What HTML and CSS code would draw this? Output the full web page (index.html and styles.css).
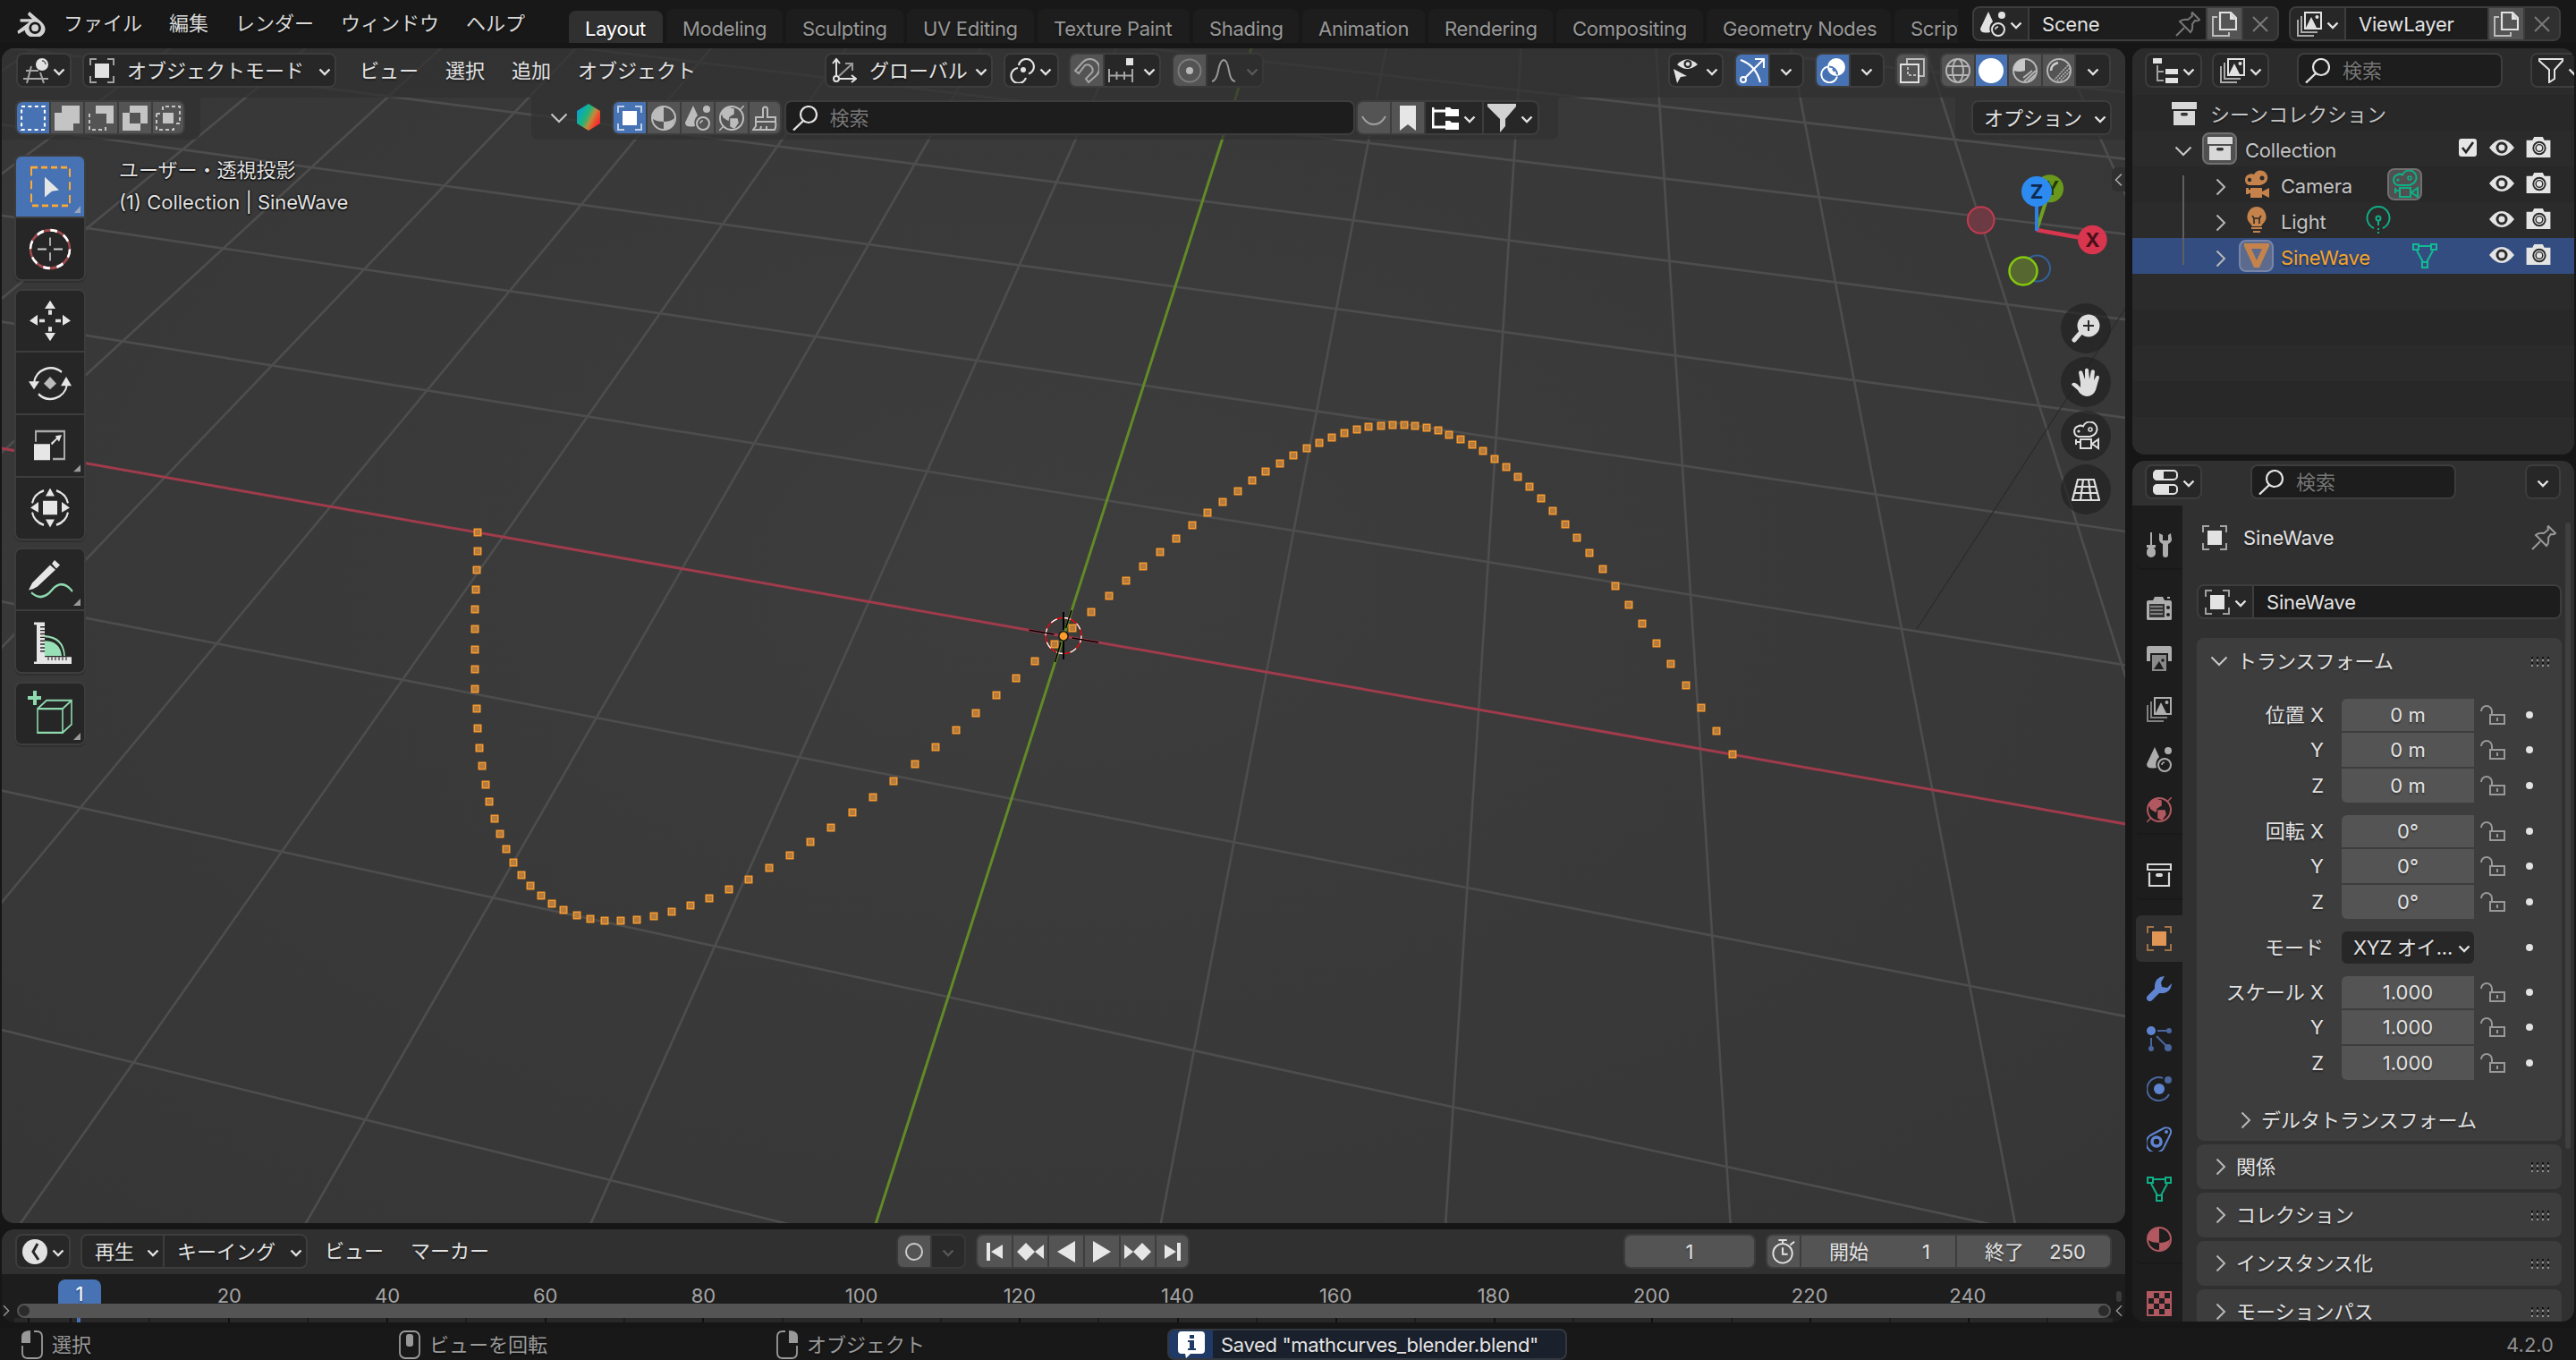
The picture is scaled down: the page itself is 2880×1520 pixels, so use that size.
FILE: index.html
```html
<!DOCTYPE html>
<html lang="ja">
<head>
<meta charset="utf-8">
<title>Blender</title>
<link rel="stylesheet" href="styles.css">
</head>
<body>
<svg class="defs" width="0" height="0">
<defs>
<linearGradient id="hexg" x1="0" y1="0.2" x2="1" y2="0.8"><stop offset="0" stop-color="#0a9be0"/><stop offset=".4" stop-color="#19b87a"/><stop offset=".62" stop-color="#c08a3c"/><stop offset=".8" stop-color="#f4442a"/><stop offset="1" stop-color="#e0203a"/></linearGradient>
<symbol id="chev" viewBox="0 0 14 9"><path d="M1.5 1.5L7 7l5.500-5.500" fill="none" stroke="currentColor" stroke-width="2.400"/></symbol>
<symbol id="chevR" viewBox="0 0 12 20"><path d="M1.500 1.500L10 10l-8.500 8.500" fill="none" stroke="currentColor" stroke-width="2"/></symbol>
<symbol id="chevD" viewBox="0 0 20 12"><path d="M1.500 1.500L10 10l8.500-8.500" fill="none" stroke="currentColor" stroke-width="2"/></symbol>
<symbol id="logo" viewBox="0 0 32 28"><path d="M1 22L14 12H4V9h13l-5-5 2-3 13 11q4 4 4 8a11 8.500 0 0 1-22 1l-7 4z" fill="currentColor"/><circle cx="20" cy="18.500" r="6.500" fill="#181818"/><circle cx="20" cy="18.500" r="3.800" fill="currentColor"/></symbol>
<symbol id="view3d" viewBox="0 0 28 28"><path d="M3 14h14M0 23h28M9 9L4 28M19 16l4 12" fill="none" stroke="#a5a5a5" stroke-width="2"/><circle cx="21" cy="7" r="7" fill="currentColor"/><path d="M21 3a4 4 0 0 1 4 4" fill="none" stroke="#555" stroke-width="1.500"/></symbol>
<symbol id="obj" viewBox="0 0 28 28"><path d="M1 8V1h7M20 1h7v7M27 20v7h-7M8 27H1v-7" fill="none" stroke="currentColor" stroke-opacity=".65" stroke-width="2"/><path d="M6 6h16v16H6z" fill="currentColor"/></symbol>
<symbol id="orient" viewBox="0 0 28 28"><path d="M5 20V2M1 6l4-5 4 5M8 23h18M22 19l5 4-5 4" fill="none" stroke="currentColor" stroke-width="2"/><path d="M8 20L22 7M15 6h8v8" fill="none" stroke="#999" stroke-width="2"/><circle cx="5" cy="23" r="3" fill="none" stroke="currentColor" stroke-width="2"/></symbol>
<symbol id="pivot" viewBox="0 0 28 28"><circle cx="15" cy="13" r="3" fill="currentColor"/><path d="M10 8a8.500 8.500 0 1 1 11 9.500M9 11a8.500 8.500 0 1 0 9 11" fill="none" stroke="currentColor" stroke-width="2.200"/></symbol>
<symbol id="magnet" viewBox="0 0 28 28"><path d="M1 14L10 4a10.500 10.500 0 0 1 15 15L16 27l-3-4 7-7a6 6 0 0 0-8-8l-7 9z" fill="none" stroke="currentColor" stroke-width="2"/></symbol>
<symbol id="incr" viewBox="0 0 28 28"><path d="M1 12v15M27 12v15M9.500 15v9M18 15v9M1 19.500h26" fill="none" stroke="#a5a5a5" stroke-width="2"/><path d="M20 0h8v8h-8z" fill="currentColor"/></symbol>
<symbol id="prop" viewBox="0 0 28 28"><circle cx="14" cy="14" r="12.500" fill="none" stroke="#7c7c7c" stroke-width="2"/><circle cx="14" cy="14" r="4" fill="#b8b8b8"/></symbol>
<symbol id="curve" viewBox="0 0 28 28"><path d="M1 26Q6 25 8 14T14 2q4 0 6 12t7 12" fill="none" stroke="#989898" stroke-width="2"/></symbol>
<symbol id="vis" viewBox="0 0 28 28"><path d="M5 7Q16-4 28 7Q16 17 5 7z" fill="currentColor"/><circle cx="17" cy="6.500" r="4.500" fill="#272727"/><circle cx="17" cy="6.500" r="2.300" fill="currentColor"/><path d="M1 12l15 8-7 1-4 7z" fill="currentColor"/></symbol>
<symbol id="gizmo" viewBox="0 0 28 28"><path d="M1 2q17 6 22 25M6 22L26 2M17 1h10v10" fill="none" stroke="currentColor" stroke-width="2.200"/><circle cx="4" cy="24" r="3" fill="none" stroke="currentColor" stroke-width="2"/></symbol>
<symbol id="overlay" viewBox="0 0 28 28"><circle cx="18" cy="10" r="10" fill="currentColor"/><path d="M8 9.500a9 9 0 1 0 11 11" fill="none" stroke="currentColor" stroke-width="2"/><path d="M10 9.500a9 9 0 0 1 9 9" fill="none" stroke="#4772b3" stroke-width="2"/><path d="M14 12l2 3" stroke="#4772b3" stroke-width="2"/></symbol>
<symbol id="xray" viewBox="0 0 28 28"><path d="M8 6V1h19v19h-5" fill="none" stroke="#bbb" stroke-width="2"/><path d="M1 7h20v20H1z" fill="none" stroke="currentColor" stroke-width="2"/><path d="M9 10v9h10" fill="none" stroke="#bbb" stroke-width="2" stroke-dasharray="3 2"/></symbol>
<symbol id="wire" viewBox="0 0 28 28"><g fill="none" stroke="#b5b5b5" stroke-width="2"><circle cx="14" cy="14" r="13"/><ellipse cx="14" cy="14" rx="6" ry="13"/><path d="M2 9h24M2 19h24"/></g></symbol>
<symbol id="solid" viewBox="0 0 28 28"><circle cx="14" cy="14" r="14" fill="#fff"/></symbol>
<symbol id="matprev" viewBox="0 0 28 28"><circle cx="14" cy="14" r="13" fill="none" stroke="#b5b5b5" stroke-width="2"/><path d="M14 1v13q-6 2-13 0A13 13 0 0 1 14 1z" fill="#c8c8c8"/><path d="M26 14L13 26M26 18L17 26M22 14L12 22" stroke="#b5b5b5" stroke-width="1.800"/></symbol>
<symbol id="rendered" viewBox="0 0 28 28"><circle cx="14" cy="14" r="13" fill="none" stroke="#b5b5b5" stroke-width="2"/><path d="M5 14q0-7 8-9" fill="none" stroke="#d0d0d0" stroke-width="2.500"/><path d="M26 11L11 26M26 15L15 26M24 8L9 24" stroke="#b5b5b5" stroke-width="1.500" stroke-dasharray="2 1"/></symbol>
<symbol id="selset" viewBox="0 0 28 28"><path d="M1 1h26v26H1z" fill="none" stroke="#fff" stroke-width="2.200" stroke-dasharray="4 3.430"/></symbol>
<symbol id="selext" viewBox="0 0 28 28"><path d="M8 0h20v20h-7v8H0V8h8z" fill="#c4c4c4"/></symbol>
<symbol id="selsub" viewBox="0 0 28 28"><path d="M8 0h20v20h-8V9H8z" fill="#c4c4c4"/><path d="M1 9v18h18v-5" fill="none" stroke="#c4c4c4" stroke-width="2" stroke-dasharray="4 3"/></symbol>
<symbol id="seldif" viewBox="0 0 28 28"><path d="M8 0h20v20h-8v8H0V8h8zM8 8v12h12V8z" fill="#c4c4c4" fill-rule="evenodd"/></symbol>
<symbol id="selint" viewBox="0 0 28 28"><path d="M8 5V1h19v19h-4M1 9v18h19v-3M1 9h4" fill="none" stroke="#c4c4c4" stroke-width="2" stroke-dasharray="4 3"/><path d="M8 8h12v12H8z" fill="#c4c4c4"/></symbol>
<symbol id="hex" viewBox="0 0 26 30"><path d="M13 0l13 8v14l-13 8L0 22V8z" fill="url(#hexg)"/></symbol>
<symbol id="mat" viewBox="0 0 28 28"><circle cx="14" cy="14" r="13" fill="none" stroke="currentColor" stroke-width="2"/><path d="M14 1v17Q6 18 2 15 0 5 14 1zM14 18q8 0 12-4-1 12-12 13z" fill="currentColor"/></symbol>
<symbol id="scene" viewBox="0 0 28 28"><path d="M9 0l5 11q-5 5-3 12-11 2-11-4z" fill="currentColor"/><circle cx="24" cy="4" r="4" fill="currentColor"/><circle cx="20" cy="20" r="7" fill="none" stroke="currentColor" stroke-width="2"/><path d="M17 20a3 3 0 0 1 3-3" fill="none" stroke="currentColor" stroke-width="1.500"/></symbol>
<symbol id="world" viewBox="0 0 28 28"><circle cx="14" cy="14" r="13" fill="none" stroke="currentColor" stroke-width="2"/><path d="M3 8L9 2l7 2v5l-5 3-1 4-5-3zM13 15h7l1 4-4 6-4-2zM0 28l5-5M28 0l-5 5" fill="currentColor" stroke="currentColor" stroke-width="1.500"/></symbol>
<symbol id="brush" viewBox="0 0 28 28"><path d="M12 13V4a2.500 2.500 0 0 1 5 0v9h9v5H4v-5zM4 18v5l-3 4h24q2-3 1-9M9 27l1-4M16 27v-4" fill="none" stroke="currentColor" stroke-width="2"/></symbol>
<symbol id="search" viewBox="0 0 28 28"><circle cx="18" cy="10" r="9" fill="none" stroke="currentColor" stroke-width="2.200"/><path d="M12 17L1 27.500" stroke="currentColor" stroke-width="2.400"/></symbol>
<symbol id="closed" viewBox="0 0 28 28"><path d="M1 12q5 9 13 9t13-9" fill="none" stroke="#a0a0a0" stroke-width="2"/></symbol>
<symbol id="bookmark" viewBox="0 0 28 28"><path d="M5 0h18v28l-9-7-9 7z" fill="#e6e6e6"/></symbol>
<symbol id="tree" viewBox="0 0 30 28"><path d="M1 2v22h14M1 6h14" fill="none" stroke="#fff" stroke-width="3"/><path d="M15 2h5l2 2h8v8H15zM15 17h5l2 2h8v8H15z" fill="#fff"/></symbol>
<symbol id="funnel" viewBox="0 0 32 32"><path d="M0 0h32v3L20 17v8l-6 7V17L0 3z" fill="#d2d2d2"/></symbol>
<symbol id="funnelo" viewBox="0 0 28 28"><path d="M1 1h26v2l-9 10v10l-6 4V13L1 3z" fill="none" stroke="currentColor" stroke-width="2"/></symbol>
<symbol id="outl" viewBox="0 0 28 28"><path d="M5 8v17h7M5 15h7" fill="none" stroke="#a0a0a0" stroke-width="2"/><path d="M0 0h10v6H0zM14 12h14v6H14zM14 22h14v6H14z" fill="currentColor"/></symbol>
<symbol id="images" viewBox="0 0 28 28"><path d="M9 1h18v18H9z" fill="none" stroke="currentColor" stroke-width="2"/><path d="M10 18l6-12 6 12z" fill="currentColor"/><circle cx="22.500" cy="6" r="2" fill="currentColor"/><path d="M5 5v18h18M1 9v18h18" fill="none" stroke="currentColor" stroke-opacity=".7" stroke-width="2"/></symbol>
<symbol id="copy" viewBox="0 0 28 28"><path d="M9 1h12l6 6v13H9z" fill="none" stroke="currentColor" stroke-width="2.200"/><path d="M20 1v8h7z" fill="currentColor"/><path d="M6 6H1v21h18v-4" fill="none" stroke="#bbb" stroke-width="2"/></symbol>
<symbol id="x" viewBox="0 0 18 18"><path d="M1 1l16 16M17 1L1 17" stroke="#7a7a7a" stroke-width="2"/></symbol>
<symbol id="pin" viewBox="0 0 28 28"><path d="M19 1l8 8q-2 2-5 1l-3 4q1 6-2 9L5 11q3-3 9-2l5-4q-1-3 0-4zM10 18L1 27" fill="none" stroke="currentColor" stroke-width="2"/></symbol>
<symbol id="coll" viewBox="0 0 28 28"><path d="M0 1h28v8H0zM2 11h24v16H2z" fill="currentColor"/><rect x="10" y="13" width="8" height="3.500" rx="1.700" fill="#333"/></symbol>
<symbol id="collo" viewBox="0 0 28 28"><path d="M1 2h26v6H1zM3 11v15h22V11" fill="none" stroke="currentColor" stroke-width="2.200"/><rect x="10" y="12" width="8" height="4" rx="2" fill="currentColor"/></symbol>
<symbol id="cam" viewBox="0 0 32 32"><path d="M7 5a6.500 6.500 0 0 1 6 0 8 8 0 1 1 10 11l-3 1H7A6.500 6.500 0 0 1 7 5z" fill="currentColor"/><circle cx="22" cy="9" r="2.500" fill="#2b2b2b"/><circle cx="8" cy="11" r="2.200" fill="#2b2b2b"/><path d="M4 20h3v2h2v-2h13v4l8-4v11l-8-4v4H9v-5H7v1H4z" fill="currentColor"/></symbol>
<symbol id="camo" viewBox="0 0 32 32"><path d="M7 5.500a6 6 0 0 1 6 0 8 8 0 1 1 10 10.500l-2 1H8A6 6 0 0 1 7 5.500z" fill="none" stroke="currentColor" stroke-width="2"/><circle cx="21" cy="9" r="2" fill="none" stroke="currentColor" stroke-width="1.600"/><circle cx="8" cy="11" r="1.600" fill="currentColor"/><path d="M5 20v6M5 23h4M10 20h12v10H10zM30 20v10l-7-5z" fill="none" stroke="currentColor" stroke-width="2"/></symbol>
<symbol id="bulb" viewBox="0 0 28 32"><path d="M14 1a11 11 0 0 1 7 19l-2 3H9l-2-3A11 11 0 0 1 14 1zM8 24h12v2H8zM10 28h8v2h-8z" fill="currentColor"/><path d="M9 11l2 3h6l2-3M11 14v6M17 14v6" fill="none" stroke="#2b2b2b" stroke-width="1.600"/></symbol>
<symbol id="lampo" viewBox="0 0 28 32"><path d="M9 25a12.500 12.500 0 1 1 10 0" fill="none" stroke="currentColor" stroke-width="2"/><circle cx="14" cy="14" r="2.500" fill="none" stroke="currentColor" stroke-width="2"/><path d="M14 17v5M14 25v2M14 29v2" stroke="currentColor" stroke-width="2"/></symbol>
<symbol id="mesh" viewBox="0 0 28 28"><path d="M0 0h28v3L17 27h-6L0 3zM8 6l6 13 6-13z" fill="currentColor" fill-rule="evenodd"/></symbol>
<symbol id="mesho" viewBox="0 0 28 28"><path d="M1 1h6v6H1zM21 1h6v6h-6zM11 21h6v6h-6zM8 3h12M5 8l7 13M23 8l-7 13" fill="none" stroke="currentColor" stroke-width="2"/></symbol>
<symbol id="eye" viewBox="0 0 28 20"><path d="M0 10Q14-8 28 10Q14 28 0 10z" fill="currentColor"/><circle cx="14" cy="10" r="6.500" fill="#2b2b2b"/><circle cx="14" cy="10" r="3.500" fill="currentColor"/></symbol>
<symbol id="photo" viewBox="0 0 28 24"><path d="M0 4h7l2-4h10l2 4h7v20H0z" fill="currentColor"/><circle cx="15" cy="13" r="7" fill="none" stroke="#2b2b2b" stroke-width="2"/><circle cx="15" cy="13" r="4" fill="none" stroke="#2b2b2b" stroke-width="1.500"/></symbol>
<symbol id="check" viewBox="0 0 20 20"><rect width="20" height="20" rx="3" fill="#e6e6e6"/><path d="M4 10l4 5 8-11" fill="none" stroke="#222" stroke-width="2.600"/></symbol>
<symbol id="props" viewBox="0 0 28 28"><rect x="1" y="1" width="26" height="10" rx="4" fill="none" stroke="currentColor" stroke-width="2"/><path d="M4 0h8v12H4q-4-1-4-6t4-6zM4 16h14v12H4q-4-1-4-6t4-6z" fill="currentColor"/><rect x="1" y="17" width="26" height="10" rx="4" fill="none" stroke="currentColor" stroke-width="2"/></symbol>
<symbol id="tool" viewBox="0 0 28 28"><path d="M5 0v13M5 13v4" stroke="currentColor" stroke-width="2"/><path d="M0 14h10v3H8q2 2 2 6a5 5 0 0 1-10 0q0-4 2-6H0zM14 1v7q0 3 4 5v12a3 3 0 0 0 6 0V13q4-2 4-5l-1-7-3 2v6h-6V3z" fill="currentColor"/></symbol>
<symbol id="rend" viewBox="0 0 28 28"><path d="M0 7q0-2 2-2h5l2-4h9l2 4h6q2 0 2 2v19q0 1-2 1H2q-2 0-2-1zM23 1h3v2h-3z" fill="currentColor"/><path d="M3 9h17v15H3z" fill="#333"/><path d="M4 12h14M4 16h14M4 20h14" stroke="#999" stroke-width="1.500"/><circle cx="24" cy="13" r="2" fill="#1d1d1d"/><circle cx="24" cy="21" r="2" fill="#1d1d1d"/></symbol>
<symbol id="outp" viewBox="0 0 28 28"><path d="M2 0h24q2 0 2 3v14h-4V8H4v9H0V3q0-3 2-3z" fill="currentColor"/><path d="M6 10h16v18H6z" fill="currentColor" opacity=".75"/><path d="M8 26l6-9 5 9z" fill="#1d1d1d"/><circle cx="18" cy="16" r="1.800" fill="#1d1d1d"/></symbol>
<symbol id="wrench" viewBox="0 0 28 28"><path d="M20 0q-12 1-11 14L1 22a3.500 3.500 0 0 0 5 5l8-8q13 1 14-11l-5 5-6-1-1-5z" fill="currentColor"/></symbol>
<symbol id="part" viewBox="0 0 28 28"><g fill="none" stroke="#4a669e" stroke-width="2"><path d="M12 5h11M5 13v10M11 11l12 12"/></g><circle cx="5" cy="5" r="5" fill="currentColor"/><circle cx="25" cy="5" r="3" fill="#4a669e"/><circle cx="5" cy="25" r="3" fill="#4a669e"/><circle cx="24" cy="24" r="4" fill="#4a669e"/></symbol>
<symbol id="phys" viewBox="0 0 28 28"><path d="M18 2a13 13 0 1 0 7 18" fill="none" stroke="#4a669e" stroke-width="2"/><circle cx="14" cy="14" r="6" fill="currentColor"/><circle cx="24" cy="4" r="4" fill="#4a669e"/></symbol>
<symbol id="constr" viewBox="0 0 28 28"><path d="M4 10L20 1.500q8-1 7 6L20 22A10.500 10.500 0 1 1 4 10z" fill="none" stroke="currentColor" stroke-width="2"/><circle cx="11" cy="17" r="5" fill="none" stroke="currentColor" stroke-width="3.500"/><circle cx="22" cy="6" r="2" fill="currentColor"/></symbol>
<symbol id="tex" viewBox="0 0 28 28"><path d="M1 1h26v26H1z" fill="none" stroke="currentColor" stroke-width="2"/><path d="M2 2h6v6H2zM14 2h6v6h-6zM8 8h6v6H8zM20 8h6v6h-6zM2 14h6v6H2zM14 14h6v6h-6zM8 20h6v6H8zM20 20h6v6h-6z" fill="currentColor"/></symbol>
<symbol id="lock" viewBox="0 0 28 22"><path d="M1 7a6 6 0 0 1 12 0v4M11 11h16v10H11z" fill="none" stroke="#999" stroke-width="2"/><path d="M19 14v4" stroke="#999" stroke-width="2"/></symbol>
<symbol id="clock" viewBox="0 0 28 28"><circle cx="14" cy="14" r="14" fill="currentColor"/><path d="M17 5l-5 9 6 9" fill="none" stroke="#272727" stroke-width="3"/></symbol>
<symbol id="drag" viewBox="0 0 22 11"><path d="M0 5h2V3H0zm6 0h2V3H6zm6 0h2V3h-2zm6 0h2V3h-2zM0 11h2V9H0zm6 0h2V9H6zm6 0h2V9h-2zm6 0h2V9h-2z" fill="#919191"/><path d="M0 2h2V0H0zm6 0h2V0H6zm6 0h2V0h-2zm6 0h2V0h-2zM0 8h2V6H0zm6 0h2V6H6zm6 0h2V6h-2zm6 0h2V6h-2z" fill="#111"/></symbol>
<symbol id="mouseL" viewBox="0 0 24 32"><path d="M14 1h3q6 0 6 6v18q0 6-6 6H7q-6 0-6-6v-8" fill="none" stroke="#999" stroke-width="1.800"/><path d="M0 14V7q0-7 10-7v14z" fill="#999"/></symbol>
<symbol id="mouseM" viewBox="0 0 24 32"><rect x="1" y="1" width="22" height="30" rx="6" fill="none" stroke="#999" stroke-width="1.800"/><rect x="8" y="4" width="8" height="14" rx="3" fill="#999"/></symbol>
<symbol id="mouseR" viewBox="0 0 24 32"><path d="M10 1H7Q1 1 1 7v18q0 6 6 6h10q6 0 6-6v-8" fill="none" stroke="#999" stroke-width="1.800"/><path d="M24 14V7q0-7-10-7v14z" fill="#999"/></symbol>
<symbol id="watch" viewBox="0 0 28 30"><circle cx="13" cy="17" r="11.500" fill="none" stroke="currentColor" stroke-width="2"/><path d="M13 10v8h6M8 1h10M13 1v4M22 7l5-4" fill="none" stroke="currentColor" stroke-width="2.200"/></symbol>
</defs>
</svg>

<div class="app">
<header class="topbar">
  <svg class="logo"><use href="#logo"/></svg>
  <nav class="menus top-menus"><span>ファイル</span><span>編集</span><span>レンダー</span><span>ウィンドウ</span><span>ヘルプ</span></nav>
  <div class="tabs">
    <span class="tab on w1">Layout</span><span class="tab w2">Modeling</span><span class="tab w3">Sculpting</span><span class="tab w4">UV Editing</span><span class="tab w5">Texture Paint</span><span class="tab w6">Shading</span><span class="tab w7">Animation</span><span class="tab w8">Rendering</span><span class="tab w9">Compositing</span><span class="tab w10">Geometry Nodes</span><span class="tab w11">Scripting</span>
  </div>
  <div class="box scene-box">
    <span class="seg drop s61"><svg class="i"><use href="#scene"/></svg><svg class="c"><use href="#chev"/></svg></span>
    <span class="seg name s199">Scene<svg class="i dim"><use href="#pin"/></svg></span>
    <span class="seg btn s40"><svg class="i"><use href="#copy"/></svg></span>
    <span class="seg off grow"><svg class="ix"><use href="#x"/></svg></span>
  </div>
  <div class="box layer-box">
    <span class="seg drop s61"><svg class="i"><use href="#images"/></svg><svg class="c"><use href="#chev"/></svg></span>
    <span class="seg name s160">ViewLayer</span>
    <span class="seg btn s40"><svg class="i"><use href="#copy"/></svg></span>
    <span class="seg off grow"><svg class="ix"><use href="#x"/></svg></span>
  </div>
</header>

<main class="work">
<div class="left">
<section class="viewport">
  <svg class="scene" id="scene-view" viewBox="2 54 2374 1313"></svg>
  <div class="vh">
    <div class="vh-left">
      <div class="box b62"><span class="seg drop"><svg class="i"><use href="#view3d"/></svg><svg class="c"><use href="#chev"/></svg></span></div>
      <div class="box b284"><span class="seg pad6"><svg class="i"><use href="#obj"/></svg><b>オブジェクトモード</b><svg class="c end"><use href="#chev"/></svg></span></div>
      <nav class="menus"><span>ビュー</span><span>選択</span><span>追加</span><span>オブジェクト</span></nav>
    </div>
    <div class="vh-mid">
      <div class="box b188"><span class="seg pad6"><svg class="i"><use href="#orient"/></svg><b>グローバル</b><svg class="c end"><use href="#chev"/></svg></span></div>
      <div class="box b62"><span class="seg drop"><svg class="i"><use href="#pivot"/></svg><svg class="c"><use href="#chev"/></svg></span></div>
      <div class="box b103"><span class="seg btn s38 dim2"><svg class="i"><use href="#magnet"/></svg></span><span class="seg drop wide"><svg class="i"><use href="#incr"/></svg><svg class="c"><use href="#chev"/></svg></span></div>
      <div class="box b103 faded"><span class="seg btn s38"><svg class="i"><use href="#prop"/></svg></span><span class="seg drop wide ghost"><svg class="i"><use href="#curve"/></svg><svg class="c"><use href="#chev"/></svg></span></div>
    </div>
    <div class="vh-right">
      <div class="box b62"><span class="seg drop wide"><svg class="i"><use href="#vis"/></svg><svg class="c"><use href="#chev"/></svg></span></div>
      <div class="box b78"><span class="seg blue s38"><svg class="i"><use href="#gizmo"/></svg></span><span class="seg mid"><svg class="c"><use href="#chev"/></svg></span></div>
      <div class="box b78"><span class="seg blue s38"><svg class="i"><use href="#overlay"/></svg></span><span class="seg mid"><svg class="c"><use href="#chev"/></svg></span></div>
      <div class="box b38"><span class="seg btn grow"><svg class="i"><use href="#xray"/></svg></span></div>
      <div class="box b191 shading"><span class="seg btn s38"><svg class="i"><use href="#wire"/></svg></span><span class="seg blue s38"><svg class="i"><use href="#solid"/></svg></span><span class="seg btn s38"><svg class="i"><use href="#matprev"/></svg></span><span class="seg btn s38"><svg class="i"><use href="#rendered"/></svg></span><span class="seg mid"><svg class="c"><use href="#chev"/></svg></span></div>
    </div>
  </div>
  <div class="vh2">
    <div class="vh2-left">
      <div class="box b190"><span class="seg blue s38"><svg class="i"><use href="#selset"/></svg></span><span class="seg btn s38"><svg class="i"><use href="#selext"/></svg></span><span class="seg btn s38"><svg class="i"><use href="#selsub"/></svg></span><span class="seg btn s38"><svg class="i"><use href="#seldif"/></svg></span><span class="seg btn grow"><svg class="i"><use href="#selint"/></svg></span></div>
    </div>
    <div class="vh2-mid">
      <svg class="c20"><use href="#chevD"/></svg><svg class="hex"><use href="#hex"/></svg>
      <div class="box b190 m1"><span class="seg blue s38"><svg class="i"><use href="#obj"/></svg></span><span class="seg btn s38 g"><svg class="i"><use href="#mat"/></svg></span><span class="seg btn s38 g"><svg class="i"><use href="#scene"/></svg></span><span class="seg btn s38 g"><svg class="i"><use href="#world"/></svg></span><span class="seg btn grow g"><svg class="i"><use href="#brush"/></svg></span></div>
      <div class="box search b638"><svg class="i"><use href="#search"/></svg><em>検索</em></div>
      <div class="box b206"><span class="seg btn s38"><svg class="i"><use href="#closed"/></svg></span><span class="seg btn s38"><svg class="i"><use href="#bookmark"/></svg></span><span class="seg drop s64"><svg class="i30"><use href="#tree"/></svg><svg class="c"><use href="#chev"/></svg></span><span class="seg drop"><svg class="i32"><use href="#funnel"/></svg><svg class="c"><use href="#chev"/></svg></span></div>
    </div>
    <div class="vh2-right"><div class="box b156"><span class="seg pad12"><b>オプション</b><svg class="c end"><use href="#chev"/></svg></span></div></div>
  </div>
  <div class="vbody">
    <div class="tools">
      <div class="tgroup">
        <span class="tl act"><svg class="ti" preserveAspectRatio="none" viewBox="0 0 76 50"><rect x="17" y="9" width="43" height="32" fill="none" stroke="#ffa832" stroke-width="2" stroke-dasharray="7 4"/><path d="M32 17l16 11-8 1-8 5z" fill="#e6e6e6"/><path d="M72 41v6h-7z" fill="#9aa7bd"/></svg></span>
        <span class="tl"><svg class="ti" preserveAspectRatio="none" viewBox="0 0 76 52"><ellipse cx="38" cy="26" rx="22" ry="16.500" fill="none" stroke="#a04a4e" stroke-width="2.500"/><ellipse cx="38" cy="26" rx="22" ry="16.500" fill="none" stroke="#fff" stroke-width="2.500" stroke-dasharray="7.600 7.600"/><path d="M24 26h10M42 26h10M38 16v7M38 29v7" stroke="#ccc" stroke-width="1.600"/></svg></span>
      </div>
      <div class="tgroup">
        <span class="tl"><svg class="ti" preserveAspectRatio="none" viewBox="0 0 76 50"><path d="M38 8l6 7H32zM38 42l6-7H32zM15 25l9-5v9zM61 25l-9-5v9z" fill="#e6e6e6"/><path d="M38 16v4M38 30v4" stroke="#ddd" stroke-width="4"/><path d="M26 25h6M44 25h6" stroke="#ddd" stroke-width="2.600"/></svg></span>
        <span class="tl"><svg class="ti" preserveAspectRatio="none" viewBox="0 0 76 52"><path d="M51 17a19 15 0 0 0-31 9M25 36a19 15 0 0 0 32-8" fill="none" stroke="#e6e6e6" stroke-width="2"/><path d="M14 25h12l-6 7zM50 29h12l-6-8z" fill="#e6e6e6"/><path d="M31 27l7-6 7 6-7 5z" fill="#bbb"/></svg></span>
        <span class="tl"><svg class="ti" preserveAspectRatio="none" viewBox="0 0 76 52"><path d="M22 23V14h32v24H41" fill="none" stroke="#aaa" stroke-width="2"/><path d="M20 25h18v14H20zM39 24l6-4-1-2 7-1-3 6-2-2-6 5z" fill="#e6e6e6"/><path d="M72 43v6h-8z" fill="#999"/></svg></span>
        <span class="tl"><svg class="ti" preserveAspectRatio="none" viewBox="0 0 76 52"><path d="M31 11q-11 3-13 11M45 11q11 3 13 11M31 41q-11-3-13-11M45 41q11-3 13-11" fill="none" stroke="#e6e6e6" stroke-width="2"/><path d="M30 20h16v12H30zM38 9l5 7H33zM38 43l5-7H33zM16 26l9-5v9zM60 26l-9-5v9z" fill="#e6e6e6"/></svg></span>
      </div>
      <div class="tgroup">
        <span class="tl"><svg class="ti" preserveAspectRatio="none" viewBox="0 0 76 50"><path d="M14 34l4-6 20-15 6 4-20 14-5 2zM40 12l3-3 6 4-4 3z" fill="#e6e6e6"/><path d="M17 36q12 8 23-2t23 1" fill="none" stroke="#8fd9af" stroke-width="2"/><path d="M72 41v6h-8z" fill="#999"/></svg></span>
        <span class="tl"><svg class="ti" preserveAspectRatio="none" viewBox="0 0 76 52"><path d="M20 9h12v30h30v6H20v-2h3V11h-3z" fill="#e6e6e6"/><path d="M27 13h5M27 16h5M27 19h5M27 22h5M27 25h5M27 28h5M27 31h5M27 34h5M36 39v3M40 39v3M44 39v3M48 39v3M52 39v3M56 39v3" stroke="#262626" stroke-width="1.100"/><path d="M32 38V25q17 0 19 13z" fill="#98e0b6"/><path d="M32 21q21 1 22 17" fill="none" stroke="#98e0b6" stroke-width="1.700"/></svg></span>
      </div>
      <div class="tgroup">
        <span class="tl"><svg class="ti" preserveAspectRatio="none" viewBox="0 0 76 50"><path d="M21 6v12" stroke="#8fd9af" stroke-width="4"/><path d="M13 12h15" stroke="#8fd9af" stroke-width="3"/><path d="M24 21h28v20H24zM24 21l10-7h28v20L52 41M52 21l10-7" fill="none" stroke="#8fd9af" stroke-width="1.600"/><path d="M72 41v6h-8z" fill="#999"/></svg></span>
      </div>
    </div>
    <div class="vtext"><p>ユーザー・透視投影</p><p>(1) Collection | SineWave</p></div>
  </div>
  <div class="side-arrow"><svg class="flip"><use href="#chevR"/></svg></div>
  <svg class="axes" viewBox="2190 180 180 150">
    <circle cx="2277.500" cy="300" r="14.500" fill="none" stroke="#33619b" stroke-width="2"/>
    <circle cx="2262" cy="303" r="15.500" fill="#56682f" stroke="#84c80d" stroke-width="2.500"/>
    <circle cx="2214.700" cy="246" r="14.800" fill="#6b3a43" stroke="#c23a50" stroke-width="2"/>
    <path d="M2277 257l15-46" stroke="#6e9f1f" stroke-width="4"/><circle cx="2291.600" cy="210.700" r="15.500" fill="#6a981c"/>
    <text x="2294" y="218" class="ax" fill="#26380a">Y</text>
    <path d="M2277 257l62 11" stroke="#d8354f" stroke-width="4.500"/><circle cx="2339.400" cy="268" r="16.300" fill="#d8354f"/>
    <path d="M2277 258v-44" stroke="#2f7fdd" stroke-width="4"/><circle cx="2277" cy="214" r="17" fill="#2c8af0"/>
    <text x="2277" y="222" class="ax" fill="#0d2b50">Z</text><text x="2339.400" y="276" class="ax" fill="#471018">X</text>
  </svg>
  <div class="nav">
    <span><svg class="n" viewBox="0 0 32 32"><circle cx="19" cy="13" r="12.500" fill="#dedede"/><path d="M10 21l-7 8" stroke="#dedede" stroke-width="5" stroke-linecap="round"/><path d="M19 7v12M13 13h12" stroke="#2a2a2a" stroke-width="2"/></svg></span>
    <span><svg class="n" viewBox="0 0 32 32"><path d="M10 17L8 5q1-3 4-1l3 9V2q2-3 4 0l1 11 2-10q3-2 4 1l-1 10 3-5q3-1 3 2l-4 14q-3 7-10 7-7-1-10-7L0 19q1-4 6-1l4 4z" fill="#dedede"/></svg></span>
    <span><svg class="n"><use href="#camo"/></svg></span>
    <span><svg class="n" viewBox="0 0 32 32"><path d="M7 5h18l6 23H1zM5 13h22M3 20h26M13 5l-3 23M19 5l3 23" fill="none" stroke="#dedede" stroke-width="2.200"/></svg></span>
  </div>
</section>

<section class="timeline">
  <div class="th">
    <div class="box b62"><span class="seg drop"><svg class="i"><use href="#clock"/></svg><svg class="c"><use href="#chev"/></svg></span></div>
    <div class="box b254"><span class="seg s92 pad14"><b>再生</b><svg class="c end"><use href="#chev"/></svg></span><span class="seg pad14"><b>キーイング</b><svg class="c end"><use href="#chev"/></svg></span></div>
    <nav class="menus"><span>ビュー</span><span>マーカー</span></nav>
    <div class="th-mid">
      <div class="box b78 faded"><span class="seg btn s38"><svg class="i" viewBox="0 0 28 28"><circle cx="14" cy="14" r="9" fill="none" stroke="#ccc" stroke-width="2"/></svg></span><span class="seg mid fade"><svg class="c"><use href="#chev"/></svg></span></div>
      <div class="box b239">
        <span class="seg btn s40"><svg class="i" viewBox="0 0 28 28"><path d="M5 4h4v20H5zM23 6v16l-13-8z" fill="#e6e6e6"/></svg></span>
        <span class="seg btn s40"><svg class="i30" viewBox="0 0 30 28"><path d="M10 4l10 10-10 10L0 14zM30 6v16l-10-8z" fill="#e6e6e6"/></svg></span>
        <span class="seg btn s40"><svg class="i" viewBox="0 0 28 28"><path d="M24 2v24L4 14z" fill="#e6e6e6"/></svg></span>
        <span class="seg btn s40"><svg class="i" viewBox="0 0 28 28"><path d="M4 2v24l20-12z" fill="#e6e6e6"/></svg></span>
        <span class="seg btn s40"><svg class="i30" viewBox="0 0 30 28"><path d="M20 4l10 10-10 10L10 14zM0 6v16l10-8z" fill="#e6e6e6"/></svg></span>
        <span class="seg btn grow"><svg class="i" viewBox="0 0 28 28"><path d="M19 4h4v20h-4zM5 6v16l13-8z" fill="#e6e6e6"/></svg></span>
      </div>
    </div>
    <div class="th-right">
      <div class="box b148"><span class="seg btn grow">1</span></div>
      <div class="box b387"><span class="seg btn s38"><svg class="i"><use href="#watch"/></svg></span><span class="seg btn s174 val"><b>開始</b><b>1</b></span><span class="seg btn grow val"><b>終了</b><b>250</b></span></div>
    </div>
  </div>
  <div class="track">
    <div class="nums"><span>20</span><span>40</span><span>60</span><span>80</span><span>100</span><span>120</span><span>140</span><span>160</span><span>180</span><span>200</span><span>220</span><span>240</span></div>
    <div class="bar"><i></i><i></i></div>
    <div class="ticks"></div>
    <div class="frame">1</div>
    <div class="frame-line"></div>
    <svg class="tarrow ta-l"><use href="#chevR"/></svg><svg class="tarrow ta-r"><use href="#chevR"/></svg>
    <div class="vscroll"></div>
  </div>
</section>
</div>

<div class="right">
<section class="outliner">
  <div class="oh">
    <div class="box b64"><span class="seg drop"><svg class="i"><use href="#outl"/></svg><svg class="c"><use href="#chev"/></svg></span></div>
    <div class="box b64"><span class="seg drop"><svg class="i"><use href="#images"/></svg><svg class="c"><use href="#chev"/></svg></span></div>
    <div class="box search b230 o-search"><svg class="i"><use href="#search"/></svg><em>検索</em></div>
    <div class="box b64 o-filter"><span class="seg drop"><svg class="i"><use href="#funnelo"/></svg><svg class="c"><use href="#chev"/></svg></span></div>
  </div>
  <div class="rows">
    <div class="row r0"><svg class="i lt"><use href="#coll"/></svg><span>シーンコレクション</span></div>
    <div class="row r1 alt"><svg class="c20"><use href="#chevD"/></svg><i class="ib"><svg class="i lt"><use href="#coll"/></svg></i><span>Collection</span><div class="tog"><svg class="ck"><use href="#check"/></svg><svg class="ey"><use href="#eye"/></svg><svg class="ph"><use href="#photo"/></svg></div></div>
    <div class="row r2"><svg class="cr"><use href="#chevR"/></svg><i class="ib no or"><svg class="i32"><use href="#cam"/></svg></i><span class="wA">Camera</span><i class="ib gr"><svg class="i32"><use href="#camo"/></svg></i><div class="tog"><svg class="ey"><use href="#eye"/></svg><svg class="ph"><use href="#photo"/></svg></div></div>
    <div class="row r2 alt"><svg class="cr"><use href="#chevR"/></svg><i class="ib no or"><svg class="i28x32"><use href="#bulb"/></svg></i><span class="wB">Light</span><i class="ib no gr"><svg class="i28x32"><use href="#lampo"/></svg></i><div class="tog"><svg class="ey"><use href="#eye"/></svg><svg class="ph"><use href="#photo"/></svg></div></div>
    <div class="row r2 sel"><svg class="cr"><use href="#chevR"/></svg><i class="ib or"><svg class="i"><use href="#mesh"/></svg></i><span class="wC">SineWave</span><i class="ib no gr"><svg class="i"><use href="#mesho"/></svg></i><div class="tog"><svg class="ey"><use href="#eye"/></svg><svg class="ph"><use href="#photo"/></svg></div></div>
    <div class="row alt"></div><div class="row"></div><div class="row alt"></div><div class="row"></div><div class="row alt"></div>
    <div class="treeline"></div>
  </div>
</section>

<section class="props">
  <div class="ph-row">
    <div class="box b64"><span class="seg drop"><svg class="i"><use href="#props"/></svg><svg class="c"><use href="#chev"/></svg></span></div>
    <div class="box search b230"><svg class="i"><use href="#search"/></svg><em>検索</em></div>
    <div class="box b40"><span class="seg mid"><svg class="c"><use href="#chev"/></svg></span></div>
  </div>
  <div class="pbody">
    <div class="ptabs">
      <div class="pg"><span><svg class="i"><use href="#tool"/></svg></span></div>
      <div class="pg g2"><span><svg class="i"><use href="#rend"/></svg></span><span><svg class="i"><use href="#outp"/></svg></span><span><svg class="i"><use href="#images"/></svg></span><span><svg class="i"><use href="#scene"/></svg></span><span class="red"><svg class="i"><use href="#world"/></svg></span></div>
      <div class="pg g2 white"><span><svg class="i"><use href="#collo"/></svg></span></div>
      <div class="pg g3"><span class="cur"><svg class="i"><use href="#obj"/></svg></span><span class="bl"><svg class="i"><use href="#wrench"/></svg></span><span class="bl"><svg class="i"><use href="#part"/></svg></span><span class="bl"><svg class="i"><use href="#phys"/></svg></span><span class="bl"><svg class="i"><use href="#constr"/></svg></span><span class="gn"><svg class="i"><use href="#mesho"/></svg></span><span class="red"><svg class="i"><use href="#mat"/></svg></span></div>
      <div class="pg g2 last"><span class="red"><svg class="i"><use href="#tex"/></svg></span></div>
    </div>
    <div class="pmain">
      <div class="crumb"><svg class="i"><use href="#obj"/></svg><b>SineWave</b><svg class="i pin"><use href="#pin"/></svg></div>
      <div class="box idbox"><span class="seg drop s63"><svg class="i"><use href="#obj"/></svg><svg class="c"><use href="#chev"/></svg></span><span class="seg name grow">SineWave</span></div>
      <div class="panel open">
        <div class="ptitle"><svg class="c20"><use href="#chevD"/></svg><b>トランスフォーム</b><svg class="drag"><use href="#drag"/></svg></div>
        <div class="fields">
          <div class="fg"><div class="f"><label>位置 X</label><span>0 m</span><svg class="lk"><use href="#lock"/></svg><i></i></div><div class="f"><label>Y</label><span>0 m</span><svg class="lk"><use href="#lock"/></svg><i></i></div><div class="f"><label>Z</label><span>0 m</span><svg class="lk"><use href="#lock"/></svg><i></i></div></div>
          <div class="fg"><div class="f"><label>回転 X</label><span>0°</span><svg class="lk"><use href="#lock"/></svg><i></i></div><div class="f"><label>Y</label><span>0°</span><svg class="lk"><use href="#lock"/></svg><i></i></div><div class="f"><label>Z</label><span>0°</span><svg class="lk"><use href="#lock"/></svg><i></i></div></div>
          <div class="fg mode"><div class="f"><label>モード</label><span>XYZ オイ...<svg class="c"><use href="#chev"/></svg></span><s class="lk"></s><i></i></div></div>
          <div class="fg"><div class="f"><label>スケール X</label><span>1.000</span><svg class="lk"><use href="#lock"/></svg><i></i></div><div class="f"><label>Y</label><span>1.000</span><svg class="lk"><use href="#lock"/></svg><i></i></div><div class="f"><label>Z</label><span>1.000</span><svg class="lk"><use href="#lock"/></svg><i></i></div></div>
        </div>
        <div class="sub"><svg class="cr"><use href="#chevR"/></svg><b>デルタトランスフォーム</b></div>
      </div>
      <div class="panel shut"><svg class="cr"><use href="#chevR"/></svg><b>関係</b><svg class="drag"><use href="#drag"/></svg></div>
      <div class="panel shut"><svg class="cr"><use href="#chevR"/></svg><b>コレクション</b><svg class="drag"><use href="#drag"/></svg></div>
      <div class="panel shut"><svg class="cr"><use href="#chevR"/></svg><b>インスタンス化</b><svg class="drag"><use href="#drag"/></svg></div>
      <div class="panel shut"><svg class="cr"><use href="#chevR"/></svg><b>モーションパス</b><svg class="drag"><use href="#drag"/></svg></div>
      <div class="pscroll"></div>
    </div>
  </div>
</section>
</div>
</main>

<footer class="status">
  <span class="hint h1"><svg class="ms"><use href="#mouseL"/></svg>選択</span>
  <span class="hint h2"><svg class="ms"><use href="#mouseM"/></svg>ビューを回転</span>
  <span class="hint h3"><svg class="ms"><use href="#mouseR"/></svg>オブジェクト</span>
  <span class="report"><i><svg class="info" viewBox="0 0 30 30"><path d="M4 0h22q4 0 4 4v17q0 4-4 4H14l-5 5-1-5H4q-4 0-4-4V4q0-4 4-4z" fill="#fff"/><path d="M13 4h5v4h-5zM11 10h7v9h2v2h-9v-2h2v-7h-2z" fill="#1f3a66"/></svg></i><b>Saved "mathcurves_blender.blend"</b></span>
  <span class="ver">4.2.0</span>
</footer>
</div>
<script src="scene.js"></script>
</body>
</html>
```
FILE: styles.css
```css
*{box-sizing:border-box}
html,body{margin:0;padding:0}
body{width:2880px;height:1520px;overflow:hidden;background:#161616;color:#e2e2e2;font:22px/30px Inter,"Noto Sans CJK JP",sans-serif}
b,em,i,s{font-weight:400;font-style:normal;text-decoration:none}
p{margin:0}
svg{display:block;flex:none}
.defs{position:absolute}
.app{width:2880px;height:1520px;display:flex;flex-direction:column;text-shadow:0 2px 2px rgba(0,0,0,.35)}
.i{width:28px;height:28px}
.i30{width:30px;height:28px}
.i32{width:32px;height:32px}
.i28x32{width:28px;height:32px}
.c{width:14px;height:9px;margin-top:3px}
.c20{width:20px;height:12px;color:#c8c8c8}
.cr{width:12px;height:20px;color:#b8b8b8}
.ix{width:18px;height:18px}

.topbar{height:54px;display:flex;background:#181818;padding-left:18px;border-bottom:6px solid #161616}
.logo{width:34px;height:29px;margin-top:12px;color:#d2d2d2}
.menus{display:flex;align-items:center;white-space:nowrap}
.menus span{padding:0 15px}
.top-menus{height:52px;width:583px;padding-left:4px}
.top-menus span{color:#d8d8d8}
.tabs{display:flex;gap:4px;width:1554px;height:38px;margin-top:10px;padding-left:1px;overflow:hidden;letter-spacing:-.3px}
.tab{flex:none;padding:7px 0 0 18px;background:#1d1d1d;border-radius:8px 8px 0 0;color:#989898;white-space:nowrap}
.tab.on{background:#303030;color:#fff;margin-top:2px;padding-top:5px}
.w1{width:105px}.w2{width:130px}.w3{width:131px}.w4{width:142px}.w5{width:170px}.w6{width:118px}.w7{width:137px}.w8{width:139px}.w9{width:164px}.w10{width:206px}.w11{width:140px}

.box{display:flex;flex:none;height:39px;border:2px solid #3d3d3d;border-radius:8px;background:#3d3d3d;overflow:hidden;gap:2px}
.seg{display:flex;align-items:center;background:#272727;flex:1;white-space:nowrap;min-width:0}
.s38{flex:none;width:36px}.s40{flex:none;width:38px}.s61{flex:none;width:60px}.s63{flex:none;width:60px}.s64{flex:none;width:63px}.s92{flex:none;width:90px}.s160{flex:none;width:158px}.s174{flex:none;width:172px}.s199{flex:none;width:197px}
.shading .s38{width:35.600px}
.drop{justify-content:center;gap:5px}
.drop.wide{gap:11px}
.btn{background:#545454;justify-content:center}
.btn.g{color:#bcbcbc}
.blue{background:#4772b3;justify-content:center;color:#fff}
.mid{justify-content:center}
.off{background:#303030;justify-content:center}
.name{background:#1d1d1d;padding-left:14px;letter-spacing:-.2px}
.name .i{margin-left:auto;margin-right:6px}
.dim{color:#777}
.dim2{color:#a5a5a5}
.pad6{padding-left:6px}
.pad6 b{margin-left:14px}
.pad14{padding-left:14px}
.pad12{padding-left:12px}
.end{margin-left:auto;margin-right:4px}
.faded{border-color:#383838;background:#383838}
.ghost{background:#2e2e2e}
.ghost .c,.fade .c{color:#585858}
.fade{background:#2a2a2a}
.search{background:#1d1d1d;align-items:center;gap:14px;padding-left:7px}
.search em{color:#767676}
.scene-box{width:343px;margin:7px 0 0 16px}
.layer-box{width:304px;margin:7px 0 0 11px}
.b38{width:38px}.b40{width:40px}.b62{width:62px}.b64{width:64px}.b78{width:78px}.b103{width:103px}.b148{width:148px}.b156{width:157px}.b188{width:188px}.b190{width:190px}.b191{width:191px}.b206{width:205px}.b230{width:230px}.b239{width:239px}.b254{width:254px}.b284{width:284px}.b387{width:387px}.b638{width:638px}

.work{display:flex;height:1424px;padding:0 2px;gap:8px}
.left{width:2374px;display:flex;flex-direction:column;gap:7px}
.right{width:494px;display:flex;flex-direction:column;gap:7px}
.viewport{position:relative;height:1313px;background:radial-gradient(ellipse at 50% 45%,#3d3d3d,#363636);border-radius:14px;overflow:hidden;display:flex;flex-direction:column}
.scene{position:absolute;left:0;top:0;width:2374px;height:1313px}
.vh,.vh2,.vbody{position:relative}
.vh{height:55px;display:flex;background:rgba(48,48,48,.72);padding:5px 0 0 16px}
.vh-left,.vh-mid,.vh-right{display:flex;height:39px;gap:12px}
.vh-left{width:904px}
.vh-left .menus{margin-left:-1px}
.vh-mid{width:943px;gap:11.500px}
.vh-right{gap:12px}
.vh-right .b62 .drop{gap:9px;padding-right:2px}
.vh2{height:47px;display:flex;justify-content:space-between}
.vh2-left,.vh2-mid,.vh2-right{background:rgba(48,48,48,.72);display:flex;padding-top:3px}
.vh2-left{width:222px;padding-left:15px;border-radius:0 0 8px 0}
.vh2-mid{width:1148px;padding-left:21px;border-radius:0 0 8px 8px;margin-right:75px}
.vh2-right{width:190px;padding-left:18px;border-radius:0 0 0 8px}
.vh2-mid .c20{margin:14px 10px 0 0}
.hex{width:26px;height:30px;margin:4px 13px 0 0}
.m1{margin-right:3px}
.b638{margin-right:1px}
.vbody{display:flex}
.tools{width:80px;padding:17px 0 0 14px;display:flex;flex-direction:column;gap:8.700px}
.tgroup{width:80px;flex:none;border:2px solid #3d3d3d;border-radius:8px;background:#3d3d3d;overflow:hidden;display:flex;flex-direction:column;gap:2px;box-shadow:0 2px 1px rgba(0,0,0,.15)}
.tl{height:68px;background:#262626;display:flex;align-items:center;justify-content:center}
.tl:first-child{height:67px}
.tl.act{background:#4772b3}
.ti{width:76px;height:67px}
.vtext{padding:16px 0 0 51px;text-shadow:0 0 3px #000,0 1px 2px #000}
.vtext p{height:36px;line-height:36px}
.side-arrow{position:absolute;left:2359px;top:133px;width:15px;height:27px;background:#303030;border-radius:6px 0 0 6px;display:flex;align-items:center;justify-content:center}
.flip{width:9px;height:16px;transform:scaleX(-1);color:#aaa}
.axes{position:absolute;left:2188px;top:126px;width:180px;height:150px;text-shadow:none}
.ax{font:700 22px Inter,sans-serif;text-anchor:middle}
.nav{position:absolute;left:2302px;top:285px;display:flex;flex-direction:column;gap:4px}
.nav span{width:56px;height:56px;border-radius:50%;background:rgba(30,30,30,.62);display:flex;align-items:center;justify-content:center;color:#dedede}
.n{width:32px;height:32px}

.timeline{height:104px;border-radius:14px;overflow:hidden;background:#1d1d1d;display:flex;flex-direction:column}
.th{height:50px;background:#303030;display:flex;padding:5px 0 0 15px}
.th .b254{margin-left:11px}
.th .menus{width:655px;margin-left:4px;height:38px}
.th-mid{display:flex;gap:11px;width:812px}
.th-right{display:flex;gap:11px}
.val{justify-content:space-between;padding:0 27px 0 31px}
.s174.val{padding-right:28px}
.th-mid .b78{margin-left:-1px}
.track{position:relative;height:54px;display:flex;flex-direction:column}
.nums{display:flex;height:33px;padding:8px 0 0 166px;color:#a4a4a4;text-shadow:none}
.nums span{width:176.700px;text-align:center;flex:none;line-height:32px}
.bar{width:2341px;height:16px;margin-left:17px;border-radius:8px;background:#545454;display:flex;justify-content:space-between;padding:2px;flex:none}
.bar i{width:12px;height:12px;border-radius:50%;background:#2b2b2b}
.ticks{height:5px;margin:0 14px;background:repeating-linear-gradient(90deg,#111 0 2px,transparent 2px 88.420px,#1c1c1c 88.420px 90.420px,transparent 90.420px 176.840px) 62px 0,#282828}
.frame{position:absolute;left:63px;top:6px;width:48px;height:27px;padding-top:3px;background:#4772b3;border-radius:8px 8px 0 0;color:#fff;text-align:center;line-height:26px}
.frame-line{position:absolute;left:84px;top:49px;width:4px;height:5px;background:#4772b3}
.tarrow{position:absolute;top:34px;width:8px;height:14px;color:#999}
.ta-l{left:1px}
.ta-r{left:2363px;transform:scaleX(-1)}
.vscroll{position:absolute;left:2364px;top:19px;width:6px;height:12px;border-radius:3px;background:#3a3a3a}

.outliner{height:454px;border-radius:14px;background:#2b2b2b;overflow:hidden}
.oh{height:52px;display:flex;padding:5px 0 0 14px;gap:11px;background:#2b2b2b;width:560px}
.o-search{margin-left:20px}
.o-filter{margin-left:20px}
.rows{position:relative}
.row{height:40px;display:flex;align-items:center;background:#282828;color:#c4c4c4}
.row span{padding-top:4px;letter-spacing:-.2px}
.row .cr,.row .c20{margin-top:5px}
.alt{background:#2b2b2b}
.lt{color:#d8d8d8}
.r0{padding-left:44px;gap:15px}
.row.r0 span{letter-spacing:0}
.r0 .i{margin-top:1px}
.r1{padding-left:47px;gap:11px}
.r1 span{margin-left:-2px}
.r2{padding-left:93px}
.ib{width:39px;height:36px;border:2px solid #707070;border-radius:8px;background:#505050;display:flex;align-items:center;justify-content:center;flex:none}
.ib.no{background:none;border-color:transparent}
.r2 .ib.or{margin:0 8px 0 14px}
.or{color:#c5834b}
.gr{color:#0fae86}
.wA{width:119px}.wB{width:89px}.wC{width:141px}
.row.sel{background:#334d80;color:#f5a42a}
.sel .ib.or{background:#5c6b8d;border-color:#7786a8}
.sel .ib.gr{color:#12bb93}
.tog{display:flex;align-items:center;gap:13px;margin-left:auto;padding:0 26px 3px 0;color:#e4e4e4}
.ck{width:20px;height:20px;margin-right:1px}
.ey{width:28px;height:20px}
.ph{width:28px;height:23px}
.treeline{position:absolute;left:56px;top:90px;width:2px;height:100px;background:#5f5f5f}

.props{height:962px;border-radius:14px;background:#303030;overflow:hidden}
.ph-row{height:50px;display:flex;padding:4px 0 0 14px}
.ph-row .search{margin:0 77px 0 54px}
.pbody{display:flex;height:912px}
.ptabs{width:56px;background:#1d1d1d;padding:18px 0 0 4px;color:#adadad}
.pg{display:flex;flex-direction:column;gap:4px;border-bottom:2px solid #191919;border-radius:0 0 0 6px}
.pg span{height:52px;display:flex;align-items:center;padding-left:12px}
.g2{margin-top:17px;gap:4.250px}
.g3{margin-top:17px}
.white{color:#d8d8d8;margin-top:19px}
.cur{background:#303030;border-radius:6px 0 0 6px;color:#e09654}
.red{color:#b25860}
.bl{color:#5f85d2}
.gn{color:#0fae86}
.last{border:0;margin-top:18px}
.pmain{position:relative;flex:1;padding:22px 0 0 16px}
.crumb{display:flex;align-items:center;height:28px;padding-left:6px}
.crumb b{margin-left:18px}
.pin{margin-left:auto;margin-right:20px;color:#999}
.idbox{width:408px;margin-top:38px}
.panel{width:408px;background:#3d3d3d;border-radius:8px}
.open{height:562px;margin-top:21px}
.ptitle{height:52px;display:flex;align-items:center;padding-left:15px}
.ptitle b{margin-left:10px}
.drag{width:22px;height:11px;margin-left:auto;margin-right:12px}
.fields{padding-top:16px;display:flex;flex-direction:column;gap:14px}
.fg{display:flex;flex-direction:column;gap:2px}
.f{display:flex;align-items:center;height:38px}
.f:first-child{height:36px}
.f label{width:142px;text-align:right}
.f span{width:148px;height:100%;margin-left:20px;background:#545454;display:flex;align-items:center;justify-content:center}
.f:first-child span{border-radius:6px 0 0 0}
.f:last-child span{border-radius:0 0 0 6px}
.mode .f span{background:#272727;border-radius:6px;gap:6px;padding-left:9px;white-space:nowrap;letter-spacing:-.2px}
.lk{width:28px;height:22px;margin-left:7px}
.f i{width:8px;height:8px;border-radius:50%;background:#e2e2e2;margin-left:23px}
.sub{display:flex;align-items:center;height:46px;margin-top:22px;padding-left:49px}
.sub b{margin-left:11px}
.shut{height:50px;margin-top:4px;display:flex;align-items:center;padding-left:21px}
.shut b{margin-left:11px}
.pscroll{position:absolute;left:428px;top:19px;width:6px;height:700px;border-radius:3px;background:#3f3f3f}

.status{height:42px;display:flex;background:#181818;color:#9a9a9a;padding-left:24px;border-top:7px solid #161616;align-items:center}
.hint{display:flex;align-items:center;gap:10px;height:30px}
.h1,.h2{width:422px}
.h3{width:437px}
.ms{width:24px;height:32px}
.report{display:flex;align-items:center;width:447px;height:35px;border:2px solid #33373f;border-radius:8px;background:#1a202c;color:#e4e4e4;overflow:hidden;letter-spacing:-.36px}
.report i{width:49px;height:35px;background:#1f3a66;display:flex;align-items:center;justify-content:center}
.report b{margin-left:9px;white-space:nowrap}
.info{width:30px;height:30px}
.ver{margin-left:auto;padding-right:25px;color:#8f8f8f}
```
FILE: scene.js
```js
// Perspective projection of the ground plane (metres) to view coordinates.
const view = document.getElementById('scene-view');
const NS = 'http://www.w3.org/2000/svg';
const depth = (x, y) => 1 - 0.0212 * x + 0.08995 * y;
const project = (x, y) => {
  const w = depth(x, y);
  return [(197.03 * x + 159.8 * y + 1189) / w, (24.22 * x - 101.4 * y + 711) / w];
};
function add(name, attrs) {
  const el = document.createElementNS(NS, name);
  for (const k in attrs) el.setAttribute(k, attrs[k]);
  view.appendChild(el);
}
function line(a, b, color, width) {
  add('line', { x1: a[0], y1: a[1], x2: b[0], y2: b[1], stroke: color, 'stroke-width': width });
}
const NEAR = 0.15;
function gridX(x, color, width) {
  const y0 = (NEAR - 1 + 0.0212 * x) / 0.08995;
  if (y0 < 60) line(project(x, y0), project(x, 60), color, width);
}
function gridY(y, color, width) {
  const x1 = (1 - NEAR + 0.08995 * y) / 0.0212;
  if (x1 > -60) line(project(-60, y), project(x1, y), color, width);
}
for (let k = -30; k <= 30; k++) {
  if (k !== 0) gridX(k, '#4d4d4d', 2.7);
  if (k !== 0 && k < 12) gridY(k, '#4d4d4d', 2.7);
}
gridX(0, '#628a26', 3);
gridY(0, '#a03b4c', 3);
line([2376, 345], [2143, 703], '#2b2b2b', 1.2);

// Vertices of the sine wave mesh.
const N = 100;
for (let i = 0; i < N; i++) {
  const x = -Math.PI + (2 * Math.PI * i) / (N - 1);
  const [u, v] = project(x, 2 * Math.sin(x));
  add('rect', { x: Math.round(u) - 3.75, y: Math.round(v) - 3.75, width: 7.5, height: 7.5,
    fill: '#b57c3e', stroke: '#f79a2e', 'stroke-width': 1.5 });
}

// 3D cursor and object origin.
add('circle', { cx: 1189, cy: 710.5, r: 20, fill: 'none', stroke: '#f00', 'stroke-width': 1.3 });
add('circle', { cx: 1189, cy: 710.5, r: 20, fill: 'none', stroke: '#fff', 'stroke-width': 1.3, 'stroke-dasharray': '7.85 7.85' });
line([1150.5, 704.3], [1178.4, 709], '#000', 1.5);
line([1198.7, 713], [1228, 718], '#000', 1.5);
line([1198, 682], [1191.5, 702], '#000', 1.5);
line([1186, 718], [1179.5, 740], '#000', 1.5);
line([1189, 684], [1189, 704], '#000', 2);
line([1189, 717], [1189, 737], '#000', 2);
add('circle', { cx: 1189, cy: 711, r: 5.2, fill: '#ff9d2a', stroke: '#1a1a1a', 'stroke-width': 1.6 });
```
